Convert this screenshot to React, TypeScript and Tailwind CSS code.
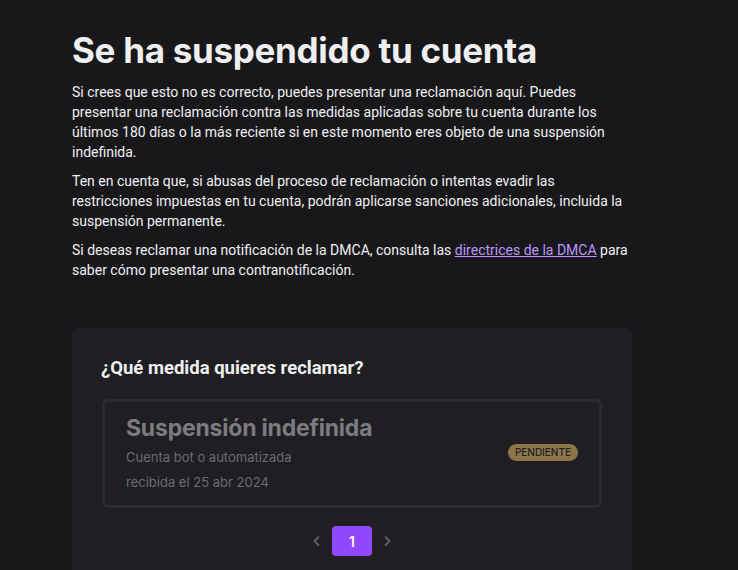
const INTER = { fontFamily: "Inter, 'Noto Sans', sans-serif" };
const ROBOTO = { fontFamily: "Roboto, 'Noto Sans', sans-serif" };

function Chevron({ dir }: { dir: "left" | "right" }) {
  return (
    <svg className="w-4 h-4" viewBox="0 0 16 16" fill="none" stroke="currentColor" strokeWidth={2}>
      {dir === "left" ? <path d="M10 3.5 5.5 8l4.5 4.5" /> : <path d="M6 3.5 10.5 8 6 12.5" />}
    </svg>
  );
}

export default function App() {
  return (
    <div className="min-h-screen h-[570px] overflow-hidden bg-[#18181b] text-[#efeff1]" style={INTER}>
      <div className="w-[560px] ml-[72px] pt-[29px]">
        <h1 className="text-[35px] leading-[42px] font-bold tracking-[-0.3px] text-[#efeff1]">
          Se ha suspendido tu cuenta
        </h1>
        <div className="mt-[11px] space-y-[9px] text-[14px] leading-[20px] text-[#efeff1]" style={ROBOTO}>
          <p>
            Si crees que esto no es correcto, puedes presentar una reclamación aquí. Puedes
            presentar una reclamación contra las medidas aplicadas sobre tu cuenta durante los
            últimos 180 días o la más reciente si en este momento eres objeto de una suspensión
            indefinida.
          </p>
          <p>
            Ten en cuenta que, si abusas del proceso de reclamación o intentas evadir las
            restricciones impuestas en tu cuenta, podrán aplicarse sanciones adicionales, incluida la
            suspensión permanente.
          </p>
          <p>
            Si deseas reclamar una notificación de la DMCA, consulta las{" "}
            <a href="#" className="text-[#bf94ff] underline">directrices de la DMCA</a> para
            saber cómo presentar una contranotificación.
          </p>
        </div>

        <section className="mt-[48px] bg-[#1f1f23] rounded-md px-[30px] pt-[27px] pb-8">
          <h2 className="text-[18.5px] leading-[26px] font-bold text-[#efeff1] -ml-[1px]" style={ROBOTO}>
            ¿Qué medida quieres reclamar?
          </h2>
          <div className="mt-[18px] border-[3px] border-[#2a2a2f] rounded-md flex items-center justify-between pl-[21px] pr-[21px] pt-[12px] pb-[14px]">
            <div className="flex flex-col">
              <span className="text-[23px] leading-[28px] font-bold text-[#7b7b80] tracking-[-0.2px]">
                Suspensión indefinida
              </span>
              <span className="text-[13px] leading-[18px] mt-[6px] text-[#6b6b70]">Cuenta bot o automatizada</span>
              <span className="text-[13px] leading-[18px] mt-[7px] text-[#6b6b70]">recibida el 25 abr 2024</span>
            </div>
            <span className="text-[10px] leading-[17px] px-[7px] rounded-full bg-[#8c7649] text-[#1f1f23] font-medium">
              PENDIENTE
            </span>
          </div>
          <div className="mt-[18px] flex items-center justify-center gap-[7px]">
            <button className="w-4 h-[30px] flex items-center justify-center text-[#5c5c61]">
              <Chevron dir="left" />
            </button>
            <button className="w-10 h-[30px] rounded bg-[#9147ff] text-white text-[14px] font-semibold">1</button>
            <button className="w-4 h-[30px] flex items-center justify-center text-[#5c5c61]">
              <Chevron dir="right" />
            </button>
          </div>
        </section>
      </div>
    </div>
  );
}
